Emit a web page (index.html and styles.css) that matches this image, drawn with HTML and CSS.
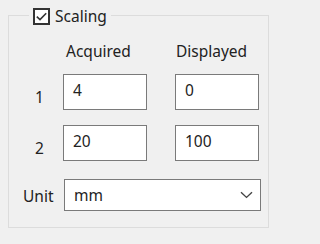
FILE: index.html
```html
<!DOCTYPE html>
<html>
<head>
<meta charset="utf-8">
<link rel="stylesheet" href="styles.css">
</head>
<body>
<div class="group">
  <div class="legend">
    <span class="check">
      <svg width="13" height="13" viewBox="0 0 13 13"><path d="M1.8 6.6 L5 9.6 L11.2 3.2" fill="none" stroke="#333" stroke-width="1.6"/></svg>
    </span>
    <span class="legend-text">Scaling</span>
  </div>
  <div class="grid">
    <div></div>
    <div class="head">Acquired</div>
    <div></div>
    <div class="head head-right">Displayed</div>

    <div class="lbl num">1</div>
    <div class="field">4</div>
    <div></div>
    <div class="field">0</div>

    <div class="lbl num">2</div>
    <div class="field">20</div>
    <div></div>
    <div class="field">100</div>

    <div class="lbl unit">Unit</div>
    <div class="select">
      <span>mm</span>
      <svg class="chev" width="13" height="8" viewBox="0 0 13 8"><path d="M1 1.2 L6.5 6.4 L12 1.2" fill="none" stroke="#444" stroke-width="1.4"/></svg>
    </div>
  </div>
</div>
</body>
</html>
```
FILE: styles.css
```css
html, body {
  margin: 0;
  padding: 0;
  background: #f0f0f0;
}
body {
  font-family: "Noto Sans", "Open Sans", sans-serif;
  font-size: 15.5px;
  color: #222;
  min-height: 244px;
}
.group {
  margin: 15px 0 0 8px;
  width: 259px;
  height: 211px;
  border: 1px solid #dcdcdc;
}
.legend {
  display: flex;
  align-items: center;
  gap: 5px;
  margin: -8px 0 0 20px;
  padding: 0 4px;
  width: max-content;
  background: #f0f0f0;
  height: 17px;
}
.check {
  box-sizing: border-box;
  width: 17px;
  height: 17px;
  border: 2px solid #333;
  background: #fff;
  display: flex;
  align-items: center;
  justify-content: center;
}
.check svg { display: block; }
.legend-text {
  line-height: 17px;
}
.grid {
  display: grid;
  grid-template-columns: 54px 84px 28px 84px;
  grid-template-rows: 20px 36px 36px 32px;
  row-gap: 15px;
  margin-top: 14px;
}
.head {
  line-height: 20px;
  padding-left: 3px;
  align-self: start;
  margin-top: 2px;
}
.head-right { padding-left: 1px; }
.field {
  box-sizing: border-box;
  height: 36px;
  border: 1px solid #7a7a7a;
  background: #fff;
  padding: 5px 0 0 9px;
  line-height: 20px;
}
.lbl {
  line-height: 20px;
  align-self: center;
  margin-top: 9px;
}
.num { padding-left: 26px; }
.unit {
  padding-left: 14px;
  margin-top: 8px;
}
.grid > .unit, .grid > .select { margin-top: 3px; }
.select {
  grid-column: 2 / 5;
  box-sizing: border-box;
  margin-left: 1px;
  width: 197px;
  height: 32px;
  border: 1px solid #7a7a7a;
  background: #fff;
  display: flex;
  align-items: center;
  justify-content: space-between;
  padding: 0 7px 0 9px;
  line-height: 20px;
}
.grid > .lbl.unit { margin-top: 8px; }
.chev { display: block; }
```
